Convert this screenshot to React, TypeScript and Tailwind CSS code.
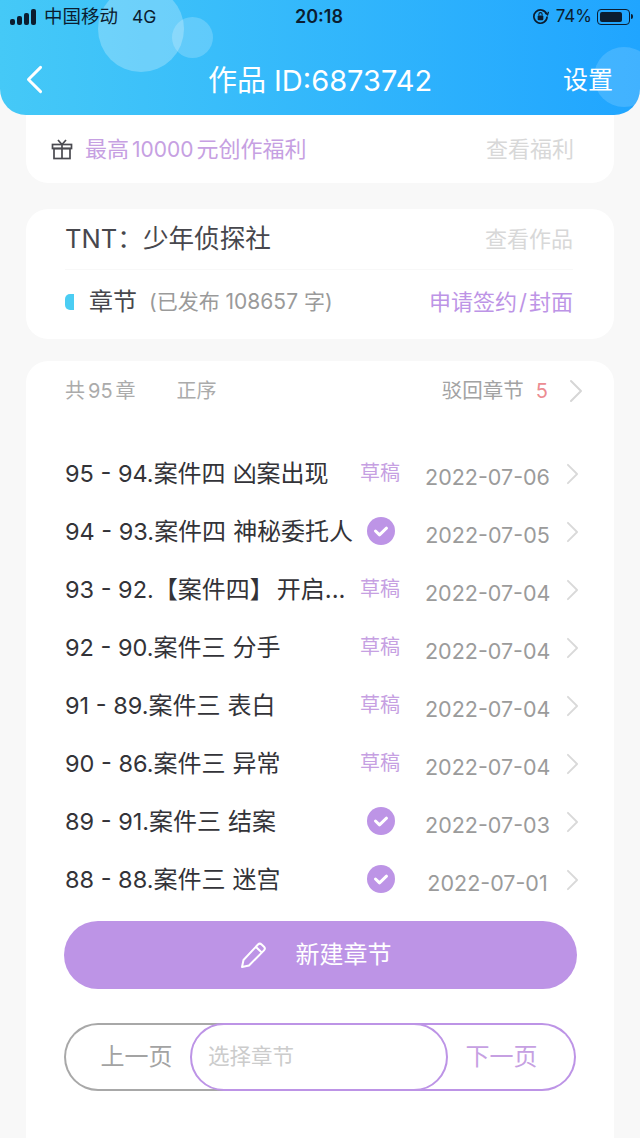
const font = { fontFamily: '"Inter", "Noto Sans CJK SC", sans-serif' };

const chapters = [
  { num: "95 - 94.", title: "案件四", name: "凶案出现", draft: true, date: "2022-07-06" },
  { num: "94 - 93.", title: "案件四", name: "神秘委托人", draft: false, date: "2022-07-05" },
  { num: "93 - 92.", title: "【案件四】", name: "开启...", draft: true, date: "2022-07-04" },
  { num: "92 - 90.", title: "案件三", name: "分手", draft: true, date: "2022-07-04" },
  { num: "91 - 89.", title: "案件三", name: "表白", draft: true, date: "2022-07-04" },
  { num: "90 - 86.", title: "案件三", name: "异常", draft: true, date: "2022-07-04" },
  { num: "89 - 91.", title: "案件三", name: "结案", draft: false, date: "2022-07-03" },
  { num: "88 - 88.", title: "案件三", name: "迷宫", draft: false, date: "2022-07-01" },
];

function Chevron({ className }: { className?: string }) {
  return (
    <svg viewBox="0 0 14 24" className={className} fill="none" stroke="currentColor" strokeWidth="2" strokeLinecap="round" strokeLinejoin="round">
      <path d="M2 2l10 10L2 22" />
    </svg>
  );
}

function CheckBadge() {
  return (
    <svg viewBox="0 0 28 28" className="w-[28px] h-[28px] mb-[2px]">
      <circle cx="14" cy="14" r="14" fill="#bd94e6" />
      <path d="M8.5 14l4 3.8 7-6.6" fill="none" stroke="#fff" strokeWidth="3" strokeLinecap="round" strokeLinejoin="round" />
    </svg>
  );
}

function StatusBar() {
  return (
    <div className="relative h-[33px] flex items-center justify-between pl-[10px] pr-[7px] text-[#0b1d30]">
      <div className="flex items-center">
        <div className="flex items-end gap-[2px] h-[16px] w-[27px]">
          <span className="w-[5px] h-[6px] rounded-[2px] bg-[#0b1d30]" />
          <span className="w-[5px] h-[9px] rounded-[2px] bg-[#0b1d30]" />
          <span className="w-[5px] h-[12px] rounded-[2px] bg-[#0b1d30]" />
          <span className="w-[5px] h-[16px] rounded-[2px] bg-[#0b1d30]" />
        </div>
        <span className="ml-[7px] text-[18.5px] leading-none">中国移动</span>
        <span className="ml-[14px] text-[17.5px] leading-none">4G</span>
      </div>
      <span className="absolute left-[295px] top-[6px] text-[18px] leading-[22px] font-semibold">20:18</span>
      <div className="flex items-center">
        <svg viewBox="0 0 18 18" className="w-[17px] h-[17px]" fill="none" stroke="#0b1d30" strokeWidth="1.8">
          <path d="M15.5 6.5A7 7 0 1 0 16 9" />
          <path d="M14 5l2.5 2.2L17.5 4" strokeWidth="1.4" />
          <rect x="6" y="8" width="6" height="5" rx="1" fill="#0b1d30" stroke="none" />
          <path d="M7.3 8V6.6a1.7 1.7 0 0 1 3.4 0V8" strokeWidth="1.1" />
        </svg>
        <span className="ml-[7px] text-[17px] leading-none">74%</span>
        <div className="ml-[5px] w-[33px] h-[16px] rounded-[4px] border border-[#0b1d30] p-[2px]">
          <div className="h-full w-[22px] rounded-[2px] bg-[#0b1d30]" />
        </div>
        <span className="ml-[1px] w-[2px] h-[5px] rounded-r-full bg-[#0b1d30]" />
      </div>
    </div>
  );
}

export default function App() {
  return (
    <div className="w-[640px] h-[1138px] overflow-hidden bg-[#f8f8f8] flex flex-col" style={font}>
      {/* header */}
      <header className="relative h-[115px] shrink-0 overflow-hidden rounded-b-[26px] bg-gradient-to-r from-[#45c9f7] to-[#20a5ff]">
        <div className="absolute left-[98px] top-[-14px] w-[86px] h-[86px] rounded-full bg-white/25" />
        <div className="absolute left-[172px] top-[17px] w-[41px] h-[41px] rounded-full bg-white/20" />
        <div className="absolute left-[594px] top-[47px] w-[60px] h-[60px] rounded-full bg-white/15" />
        <div className="relative">
          <StatusBar />
          <div className="relative mt-[15px] h-[64px] flex items-center justify-center text-white">
            <Chevron className="absolute left-[26px] top-[16px] w-[17px] h-[31px] rotate-180 text-white [&_path]:stroke-[2.4]" />
            <h1 className="text-[29px] leading-none font-normal">作品 ID:6873742</h1>
            <span className="absolute right-[27px] top-[20px] text-[25px] leading-none">设置</span>
          </div>
        </div>
      </header>

      <main className="flex-1 flex flex-col mx-[26px]">
        {/* benefit card */}
        <section className="h-[68px] shrink-0 rounded-b-[22px] bg-white flex items-center justify-between pl-[25px] pr-[40px]">
          <div className="flex items-center">
            <svg viewBox="0 0 22 22" className="w-[22px] h-[22px]" fill="none" stroke="#4a4a50" strokeWidth="1.7">
              <rect x="1.5" y="6.5" width="19" height="4" />
              <rect x="3" y="10.5" width="16" height="10" />
              <path d="M11 6.5v14M7 2l4 4.5L15 2" />
            </svg>
            <span className="ml-[12px] text-[22px] leading-none text-[#c6a0e2]">
              最高<span className="mx-[3px] text-[21px]">10000</span>元创作福利
            </span>
          </div>
          <span className="text-[22px] leading-none text-[#d8d8d8]">查看福利</span>
        </section>

        {/* work card */}
        <section className="mt-[26px] h-[130px] shrink-0 rounded-[22px] bg-white pl-[39px] pr-[41px]">
          <div className="h-[61px] flex items-center justify-between border-b border-[#f8f8f8]">
            <span className="text-[25.6px] leading-none text-[#47474d]">TNT：少年侦探社</span>
            <span className="text-[22px] leading-none text-[#d8d8d8]">查看作品</span>
          </div>
          <div className="h-[63px] flex items-center justify-between">
            <div className="flex items-center">
              <span className="w-[9px] h-[16px] rounded-l-[5px] bg-[#4bcdf3]" />
              <span className="ml-[15px] text-[24px] leading-none text-[#47474d]">章节</span>
              <span className="ml-[12px] text-[21px] leading-none text-[#9a9a9a]">(已发布 108657 字)</span>
            </div>
            <span className="text-[22px] leading-none text-[#bd94e6]">
              申请签约<span className="mx-[2px]">/</span>封面
            </span>
          </div>
        </section>

        {/* chapter list */}
        <section className="mt-[22px] flex-1 rounded-t-[22px] bg-white pl-[39px] pr-[35px]">
          <div className="h-[60px] flex items-center text-[20px] leading-none">
            <span className="text-[#ababab]">
              共<span className="mx-[3px]">95</span>章
            </span>
            <span className="ml-[41px] text-[#ababab]">正序</span>
            <span className="ml-auto text-[20.5px] text-[#a3a3a3]">驳回章节</span>
            <span className="ml-[12px] text-[#ec8c92]">5</span>
            <Chevron className="ml-[21px] -mr-[4px] w-[14px] h-[24px] text-[#d6d6d6]" />
          </div>
          <ul className="mt-[24px]">
            {chapters.map((c) => (
              <li key={c.num} className="h-[58px] flex items-center">
                <span className="flex-1 min-w-0 text-[24px] leading-none text-[#333338] whitespace-nowrap">
                  <span className="text-[23.5px]">{c.num}</span>
                  {c.title}
                  <span className={c.title.endsWith("】") ? "ml-[3px]" : "ml-[7px]"}>{c.name}</span>
                </span>
                <div className="w-[40px] flex justify-center">
                  {c.draft ? (
                    <span className="pr-[2px] text-[20px] leading-none text-[#c6a0e2] whitespace-nowrap mb-[2px]">草稿</span>
                  ) : (
                    <CheckBadge />
                  )}
                </div>
                <span className="ml-[24px] w-[125px] text-center text-[21.5px] leading-none text-[#9b9b9b] mt-[8px] whitespace-nowrap">{c.date}</span>
                <Chevron className="ml-[16px] w-[13px] h-[22px] text-[#d9d9d9]" />
              </li>
            ))}
          </ul>
          <button className="mt-[12px] -ml-[1px] h-[68px] w-[513px] rounded-full bg-[#bd94e6] flex items-center justify-center pr-[10px] text-white">
            <svg viewBox="0 0 28 28" className="w-[28px] h-[28px]" fill="none" stroke="#fff" strokeWidth="2" strokeLinejoin="round">
              <path d="M2 26l1.5-7L18 3.5a2.6 2.6 0 0 1 3.6 0l2.4 2.3a2.6 2.6 0 0 1 0 3.6L9 24.5z" />
              <path d="M16 6l6 5.8" />
            </svg>
            <span className="ml-[28px] text-[24px] leading-none">新建章节</span>
          </button>
          <div className="mt-[34px] -ml-[1px] h-[68px] w-[512px] flex text-[24px] leading-none">
            <button className="w-[171px] shrink-0 rounded-l-full border-2 border-r-0 border-[#a8a8a8] text-[#a3a3a3] pr-[28px] flex items-center justify-center">
              上一页
            </button>
            <div className="-ml-[45px] z-10 w-[258px] shrink-0 rounded-full border-2 border-[#bd94e6] bg-white flex items-center pl-[16px] text-[21.5px] text-[#cccccc]">
              选择章节
            </div>
            <button className="-ml-[44px] flex-1 rounded-r-full border-2 border-l-0 border-[#bd94e6] text-[#c6a0e2] pl-[44px] pr-[19px] flex items-center justify-center">
              下一页
            </button>
          </div>
        </section>
      </main>
    </div>
  );
}
